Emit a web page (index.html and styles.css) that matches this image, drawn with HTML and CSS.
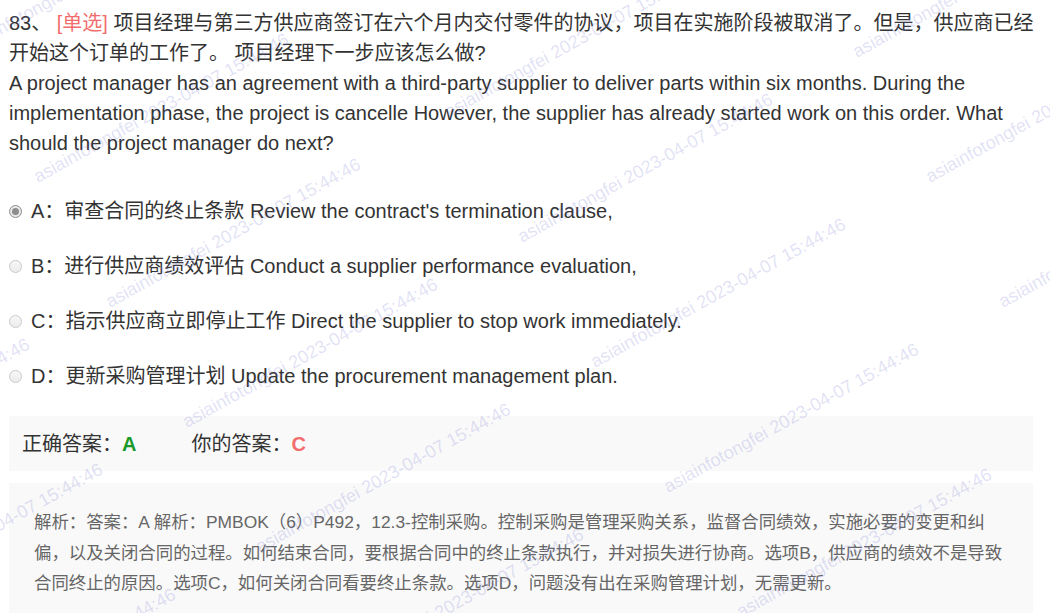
FILE: index.html
```html
<!DOCTYPE html>
<html lang="zh-CN">
<head>
<meta charset="utf-8">
<title>83 单选</title>
<link rel="stylesheet" href="styles.css">
</head>
<body>
<div class="page">
  <div class="question">
    <p class="stem"><span class="num">83、</span> <span class="tag">[单选]</span> 项目经理与第三方供应商签订在六个月内交付零件的协议，项目在实施阶段被取消了。但是，供应商已经开始这个订单的工作了。 项目经理下一步应该怎么做?</p>
    <p class="stem-en">A project manager has an agreement with a third-party supplier to deliver parts within six months. During the implementation phase, the project is cancelle However, the supplier has already started work on this order. What should the project manager do next?</p>
  </div>
  <ul class="options">
    <li class="option"><span class="radio checked"></span><span class="label">A：审查合同的终止条款 Review the contract's termination clause,</span></li>
    <li class="option"><span class="radio"></span><span class="label">B：进行供应商绩效评估 Conduct a supplier performance evaluation,</span></li>
    <li class="option"><span class="radio"></span><span class="label">C：指示供应商立即停止工作 Direct the supplier to stop work immediately.</span></li>
    <li class="option"><span class="radio"></span><span class="label">D：更新采购管理计划 Update the procurement management plan.</span></li>
  </ul>
  <div class="answer">
    <span class="ans-item">正确答案：<b class="right">A</b></span>
    <span class="ans-item mine">你的答案：<b class="wrong">C</b></span>
  </div>
  <div class="analysis">
    <p>解析：答案：A 解析：PMBOK（6）P492，12.3-控制采购。控制采购是管理采购关系，监督合同绩效，实施必要的变更和纠偏，以及关闭合同的过程。如何结束合同，要根据合同中的终止条款执行，并对损失进行协商。选项B，供应商的绩效不是导致合同终止的原因。选项C，如何关闭合同看要终止条款。选项D，问题没有出在采购管理计划，无需更新。</p>
  </div>
</div>
<div class="watermarks" aria-hidden="true">
  <span class="wm" style="left:-32px;top:38px">asiainfotongfei 2023-04-07 15:44:46</span>
  <span class="wm" style="left:38px;top:168px">asiainfotongfei 2023-04-07 15:44:46</span>
  <span class="wm" style="left:449px;top:103px">asiainfotongfei 2023-04-07 15:44:46</span>
  <span class="wm" style="left:110px;top:293px">asiainfotongfei 2023-04-07 15:44:46</span>
  <span class="wm" style="left:-221px;top:473px">asiainfotongfei 2023-04-07 15:44:46</span>
  <span class="wm" style="left:522px;top:228px">asiainfotongfei 2023-04-07 15:44:46</span>
  <span class="wm" style="left:857px;top:43px">asiainfotongfei 2023-04-07 15:44:46</span>
  <span class="wm" style="left:187px;top:413px">asiainfotongfei 2023-04-07 15:44:46</span>
  <span class="wm" style="left:-148px;top:598px">asiainfotongfei 2023-04-07 15:44:46</span>
  <span class="wm" style="left:595px;top:353px">asiainfotongfei 2023-04-07 15:44:46</span>
  <span class="wm" style="left:930px;top:168px">asiainfotongfei 2023-04-07 15:44:46</span>
  <span class="wm" style="left:260px;top:538px">asiainfotongfei 2023-04-07 15:44:46</span>
  <span class="wm" style="left:-75px;top:723px">asiainfotongfei 2023-04-07 15:44:46</span>
  <span class="wm" style="left:668px;top:478px">asiainfotongfei 2023-04-07 15:44:46</span>
  <span class="wm" style="left:1003px;top:293px">asiainfotongfei 2023-04-07 15:44:46</span>
  <span class="wm" style="left:333px;top:663px">asiainfotongfei 2023-04-07 15:44:46</span>
  <span class="wm" style="left:741px;top:603px">asiainfotongfei 2023-04-07 15:44:46</span>
</div>
</body>
</html>
```
FILE: styles.css
```css
html, body {
  margin: 0;
  padding: 0;
  background: #ffffff;
}
body {
  font-family: "Liberation Sans", "Noto Sans CJK SC", sans-serif;
  color: #333333;
  font-size: 20px;
  line-height: 30px;
  position: relative;
}
.page {
  width: 1024px;
  padding: 8px 0 0 9px;
}
.question p {
  margin: 0;
}
.question .stem {
  margin-right: -12px;
}
.tag {
  color: #f26d6d;
}
.options {
  list-style: none;
  margin: 38px 0 0 0;
  padding: 0;
  display: flex;
  flex-direction: column;
  gap: 25px;
}
.option {
  display: flex;
  align-items: center;
  height: 30px;
}
.radio {
  width: 13px;
  height: 13px;
  box-sizing: border-box;
  border-radius: 50%;
  border: 1px solid #c9c9c9;
  background: linear-gradient(#f7f7f7, #ececec);
  margin-right: 9px;
  flex: none;
  position: relative;
}
.radio.checked {
  border: 1px solid #8e8e8e;
  background: #e9e9e9;
}
.radio.checked::after {
  content: "";
  position: absolute;
  left: 2px;
  top: 2px;
  width: 7px;
  height: 7px;
  border-radius: 50%;
  background: #8d8d8d;
}
.answer {
  margin-top: 25px;
  height: 55px;
  background: #f9f9f9;
  display: flex;
  align-items: center;
  padding-left: 13px;
}
.ans-item b {
  font-weight: bold;
}
.mine {
  margin-left: 55px;
}
.right {
  color: #1a9a28;
}
.wrong {
  color: #f26d6d;
}
.analysis {
  margin-top: 12px;
  background: #f9f9f9;
  padding: 24px 24px 14px 25px;
  color: #666666;
  font-size: 17.4px;
  line-height: 30.5px;
}
.analysis p {
  margin: 0;
}
.watermarks {
  position: absolute;
  left: 0;
  top: 0;
  width: 1050px;
  height: 613px;
  overflow: hidden;
  pointer-events: none;
}
.wm {
  position: absolute;
  white-space: nowrap;
  font-family: "Liberation Sans", sans-serif;
  font-size: 18px;
  line-height: 18px;
  color: rgba(120, 120, 210, 0.22);
  transform-origin: 0 15px;
  transform: rotate(-29deg);
}
```
